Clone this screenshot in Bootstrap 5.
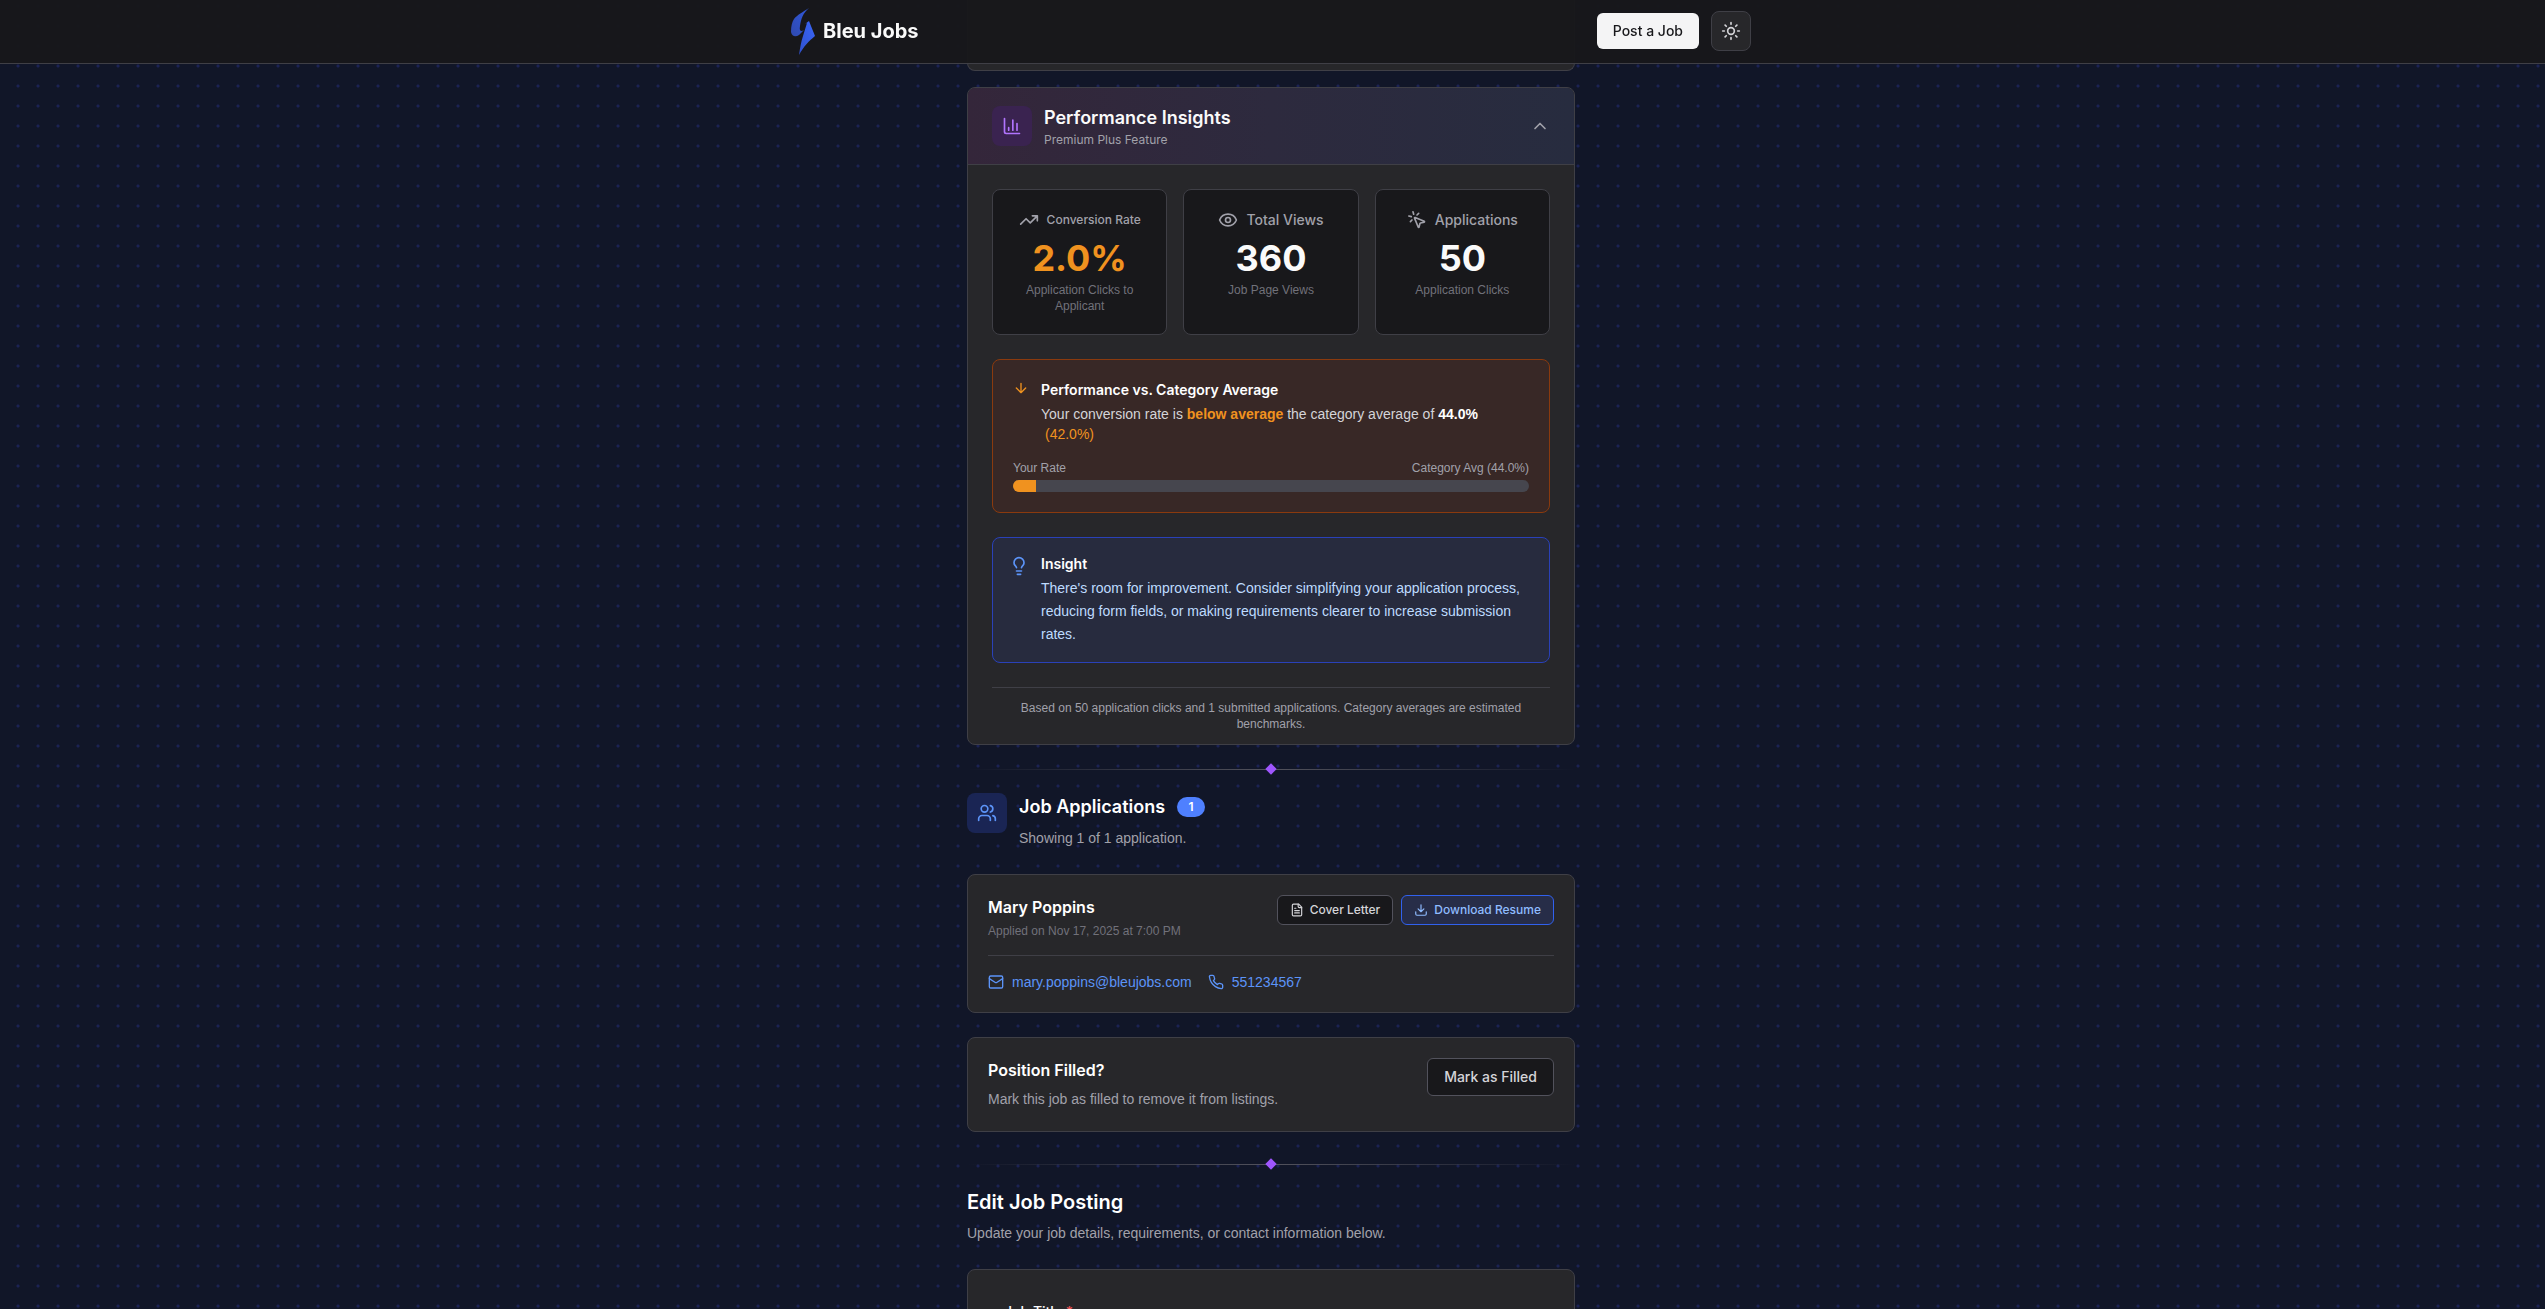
<!DOCTYPE html>
<html lang="en" data-bs-theme="dark">
<head>
<meta charset="utf-8">
<meta name="viewport" content="width=device-width, initial-scale=1">
<title>Bleu Jobs</title>
<link href="https://cdn.jsdelivr.net/npm/bootstrap@5.3.0/dist/css/bootstrap.min.css" rel="stylesheet">
<style>
  :root { --line: #3f3f46; --panel: #27272a; --ink: #18181b; --muted: #a1a1aa; --faint: #71717a; --scroll: 3px; --copy: "Liberation Sans", Arial, sans-serif; }
  html { overflow: hidden; }
  body {
    font-family: Inter, "Liberation Sans", sans-serif; font-size: 14px; line-height: 20px; color: #fafafa;
    background-color: #111628;
    background-image: radial-gradient(circle, #1b2254 1px, transparent 2px);
    background-size: 20px 20px; background-position: 8px -4px;
    padding-right: var(--scroll);
  }
  h1, h2, h3, p { margin: 0; }
  svg { flex: none; fill: none; stroke: currentColor; stroke-width: 2; stroke-linecap: round; stroke-linejoin: round; }
  .site-nav { background: rgba(24,24,27,.97); border-bottom: 1px solid var(--line); padding: 11px var(--scroll) 12px 0; }
  .site-nav-inner { max-width: 960px; }
  .brand-name { font-size: 20px; font-weight: 700; line-height: 28px; color: #fafafa; }
  .brand-link { margin: -4px 0; }
  .brand-link svg { stroke: none; }
  .btn { --bs-btn-font-size: 14px; --bs-btn-font-weight: 500; --bs-btn-line-height: 20px; --bs-btn-border-radius: 6px; --bs-btn-padding-x: 16px; --bs-btn-padding-y: 8px; }
  .btn-post { --bs-btn-bg: #f4f4f5; --bs-btn-color: #18181b; --bs-btn-border-width: 0; --bs-btn-hover-bg: #fff; --bs-btn-hover-color: #18181b; }
  .btn-theme { --bs-btn-bg: #27272a; --bs-btn-color: #d4d4d8; --bs-btn-border-color: #3f3f46; --bs-btn-padding-x: 9px; --bs-btn-padding-y: 9px; --bs-btn-border-radius: 8px; }
  .btn-ink { --bs-btn-bg: #18181b; --bs-btn-color: #d4d4d8; --bs-btn-border-color: #52525c; }
  .btn-resume { --bs-btn-bg: #272d48; --bs-btn-color: #8fbcff; --bs-btn-border-color: #3161ee; }
  .btn-compact { --bs-btn-font-size: 12px; --bs-btn-line-height: 16px; --bs-btn-padding-x: 12px; --bs-btn-padding-y: 6px; }
  .gap-icon { gap: 6px; }
  .gap-12 { gap: 12px; }
  .page-col { max-width: 608px; }
  .panel { background: var(--panel); border: 1px solid var(--line); border-radius: 8px; }
  .panel-above { height: 71px; border-top: 0; border-radius: 0 0 8px 8px; }
  .panel-pad { padding: 20px; }
  .insight-toggle {
    padding: 16px 24px; border: 0; border-bottom: 1px solid var(--line); border-radius: 7px 7px 0 0; color: inherit;
    background: linear-gradient(90deg, #34263a, #2d2a3e 50%, #272c3f);
  }
  .icon-tile { width: 40px; height: 40px; border-radius: 8px; flex: none; }
  .tile-purple { background: #3a2350; color: #b074fc; }
  .tile-blue { background: #1a2554; color: #5c94f8; }
  .title-lg { font-size: 18px; line-height: 28px; font-weight: 600; }
  .title-xl { font-size: 20px; line-height: 28px; font-weight: 600; }
  .title-md { font-size: 16px; line-height: 24px; font-weight: 600; }
  .title-sm { font-size: 14px; line-height: 20px; font-weight: 600; }
  .tiny { font-size: 12px; line-height: 16px; }
  .copy { font-family: var(--copy); }
  .c-muted { color: var(--muted); }
  .c-faint { color: var(--faint); }
  .c-orange { color: #f0921f; }
  .insight-body { padding: 24px 24px 12px; gap: 24px; }
  .stat { background: var(--ink); border: 1px solid var(--line); border-radius: 8px; padding: 20px; text-align: center; flex: 1 1 0; }
  .stat-label { font-weight: 500; color: var(--muted); margin-bottom: 8px; height: 20px; }
  .stat-num { font-size: 36px; line-height: 40px; font-weight: 700; margin-bottom: 4px; }
  .compare { background: #382826; border: 1px solid #8a3a0e; border-radius: 8px; padding: 20px; }
  .compare-text { color: #d4d4d8; margin-top: 4px; }
  .rate-bar { --bs-progress-height: 12px; --bs-progress-bg: #46464e; --bs-progress-bar-bg: #f0921f; --bs-progress-border-radius: 6px; }
  .tip { background: #272b3e; border: 1px solid #2a41b8; border-radius: 8px; padding: 16px; }
  .tip-icon { color: #5c94f8; margin-top: 2px; }
  .tip-title { margin-bottom: 3px; }
  .tip-text { line-height: 23px; color: #bedbff; }
  .foot-note { border-top: 1px solid var(--line); padding-top: 12px; text-align: center; }
  .rule { position: relative; padding: 24px 0; }
  .rule::before { content: ""; display: block; height: 1px; margin-bottom: -1px; background: linear-gradient(90deg, transparent, #52525c 50%, transparent); }
  .rule::after { content: ""; position: absolute; left: 50%; top: 50%; width: 8px; height: 8px; background: #9f56fd; transform: translate(-50%, -50%) rotate(45deg); }
  .count-pill { background: #4f80ff; color: #fff; font-size: 12px; line-height: 16px; font-weight: 600; padding: 2px 0; min-width: 28px; text-align: center; border-radius: 10px; }
  .sub { line-height: 23px; color: var(--muted); margin-top: 6px; }
  .contact-row { border-top: 1px solid var(--line); margin-top: 16px; padding-top: 16px; }
  .contact-row a { color: #5c94f8; font-weight: 500; text-decoration: none; }
  .form-panel { padding: 32px 36px; }
  .form-panel .form-label { font-weight: 500; margin-bottom: 8px; }
  .form-panel .form-control { background: var(--ink); border-color: var(--line); }
  .req { color: #fb5a5a; }
</style>
</head>
<body>
<nav class="site-nav fixed-top">
  <div class="site-nav-inner mx-auto d-flex align-items-center justify-content-between">
    <a href="#" class="brand-link d-flex align-items-center gap-2 text-decoration-none">
      <svg width="24" height="47" viewBox="0 0 24 47" aria-hidden="true">
        <defs>
          <linearGradient id="g1" x1="0" y1="1" x2="1" y2="0"><stop offset="0" stop-color="#2f49ae"/><stop offset="1" stop-color="#3058dc"/></linearGradient>
          <linearGradient id="g2" x1="0" y1="1" x2="1" y2="0"><stop offset="0" stop-color="#2f50cc"/><stop offset="1" stop-color="#3a66f8"/></linearGradient>
        </defs>
        <path fill="url(#g1)" d="M18 0C12 4 6 7 3 11C1 14 0 18 0 24C1 29 5 29 8 27L13 22C10 24 8 23 9 18C10 11 12 5 18 0Z"/>
        <path fill="url(#g2)" d="M18 13L24 28C18 33 13 38 8 47C9 40 10 34 12 28L16 15L14 16Z"/>
      </svg>
      <span class="brand-name">Bleu Jobs</span>
    </a>
    <div class="d-flex align-items-center gap-12">
      <button type="button" class="btn btn-post">Post a Job</button>
      <button type="button" class="btn btn-theme d-flex" aria-label="Toggle theme">
        <svg width="20" height="20" viewBox="0 0 24 24"><circle cx="12" cy="12" r="4"/><path d="M12 2v2M12 20v2M4.93 4.93l1.41 1.41M17.66 17.66l1.41 1.41M2 12h2M20 12h2M6.34 17.66l-1.41 1.41M19.07 4.93l-1.41 1.41"/></svg>
      </button>
    </div>
  </div>
</nav>

<main class="page-col mx-auto">
  <div class="panel panel-above mb-3"></div>

  <section class="panel">
    <button type="button" class="insight-toggle w-100 d-flex align-items-center gap-12 text-start" aria-expanded="true">
      <span class="icon-tile tile-purple d-flex align-items-center justify-content-center">
        <svg width="20" height="20" viewBox="0 0 24 24"><path d="M3 3v16a2 2 0 0 0 2 2h16M13 17V5M18 17V9M8 17v-3"/></svg>
      </span>
      <span class="flex-grow-1">
        <span class="title-lg d-block">Performance Insights</span>
        <span class="tiny c-muted d-block">Premium Plus Feature</span>
      </span>
      <svg class="c-muted" width="20" height="20" viewBox="0 0 24 24"><path d="m18 15-6-6-6 6"/></svg>
    </button>

    <div class="insight-body d-flex flex-column">
      <div class="d-flex gap-3">
        <div class="stat">
          <div class="stat-label tiny d-flex align-items-center justify-content-center gap-2">
            <svg width="20" height="20" viewBox="0 0 24 24"><path d="M22 7l-8.500 8.500-5-5L2 17M16 7h6v6"/></svg>
            <span class="text-nowrap">Conversion Rate</span>
          </div>
          <div class="stat-num c-orange">2.0%</div>
          <div class="tiny c-faint copy">Application Clicks to Applicant</div>
        </div>
        <div class="stat">
          <div class="stat-label d-flex align-items-center justify-content-center gap-2">
            <svg width="20" height="20" viewBox="0 0 24 24"><path d="M2.062 12.348a1 1 0 0 1 0-.696 10.750 10.750 0 0 1 19.876 0 1 1 0 0 1 0 .696 10.750 10.750 0 0 1-19.876 0"/><circle cx="12" cy="12" r="3"/></svg>
            <span class="text-nowrap">Total Views</span>
          </div>
          <div class="stat-num">360</div>
          <div class="tiny c-faint copy">Job Page Views</div>
        </div>
        <div class="stat">
          <div class="stat-label d-flex align-items-center justify-content-center gap-2">
            <svg width="20" height="20" viewBox="0 0 24 24"><path d="M14 4.100 12 6M5.100 8l-2.900-.8M6 12l-1.900 2M7.200 2.200 8 5.100M9.037 9.690a.498.498 0 0 1 .653-.653l11 4.500a.5.5 0 0 1-.074.949l-4.349 1.041a1 1 0 0 0-.740.739l-1.040 4.350a.5.5 0 0 1-.950.074z"/></svg>
            <span class="text-nowrap">Applications</span>
          </div>
          <div class="stat-num">50</div>
          <div class="tiny c-faint copy">Application Clicks</div>
        </div>
      </div>

      <div class="compare">
        <div class="d-flex gap-12 mb-3">
          <svg class="c-orange" width="16" height="16" viewBox="0 0 24 24"><path d="M12 5v14M19 12l-7 7-7-7"/></svg>
          <div>
            <h3 class="title-sm">Performance vs. Category Average</h3>
            <p class="compare-text copy">Your conversion rate is <span class="c-orange fw-semibold">below average</span> the category average of <span class="text-white fw-semibold">44.0%</span> <span class="c-orange ms-1">(42.0%)</span></p>
          </div>
        </div>
        <div class="tiny c-muted copy d-flex justify-content-between mb-1"><span>Your Rate</span><span>Category Avg (44.0%)</span></div>
        <div class="progress rate-bar" role="progressbar" aria-label="Your rate" aria-valuenow="2" aria-valuemin="0" aria-valuemax="44">
          <div class="progress-bar" style="width: 4.5%"></div>
        </div>
      </div>

      <div class="tip d-flex gap-12">
        <svg class="tip-icon" width="20" height="20" viewBox="0 0 24 24"><path d="M15 14c.2-1 .7-1.700 1.500-2.500 1-.9 1.500-2.200 1.500-3.500A6 6 0 0 0 6 8c0 1 .2 2.200 1.500 3.500.7.7 1.300 1.500 1.500 2.500M9 18h6M10 22h4"/></svg>
        <div>
          <h3 class="title-sm tip-title">Insight</h3>
          <p class="tip-text copy">There's room for improvement. Consider simplifying your application process, reducing form fields, or making requirements clearer to increase submission rates.</p>
        </div>
      </div>

      <p class="foot-note tiny c-muted copy">Based on 50 application clicks and 1 submitted applications. Category averages are estimated benchmarks.</p>
    </div>
  </section>

  <div class="rule"></div>

  <section>
    <div class="d-flex gap-12 mb-4">
      <span class="icon-tile tile-blue d-flex align-items-center justify-content-center">
        <svg width="20" height="20" viewBox="0 0 24 24"><path d="M16 21v-2a4 4 0 0 0-4-4H6a4 4 0 0 0-4 4v2"/><circle cx="9" cy="7" r="4"/><path d="M22 21v-2a4 4 0 0 0-3-3.870M16 3.130a4 4 0 0 1 0 7.750"/></svg>
      </span>
      <div>
        <div class="d-flex align-items-center gap-12">
          <h2 class="title-lg">Job Applications</h2>
          <span class="count-pill">1</span>
        </div>
        <p class="sub copy">Showing 1 of 1 application.</p>
      </div>
    </div>

    <article class="panel panel-pad mb-4">
      <div class="d-flex justify-content-between align-items-start">
        <div>
          <h3 class="title-md mb-1">Mary Poppins</h3>
          <p class="tiny c-faint copy">Applied on Nov 17, 2025 at 7:00 PM</p>
        </div>
        <div class="d-flex gap-2">
          <button type="button" class="btn btn-ink btn-compact d-flex align-items-center gap-icon">
            <svg width="14" height="14" viewBox="0 0 24 24"><path d="M15 2H6a2 2 0 0 0-2 2v16a2 2 0 0 0 2 2h12a2 2 0 0 0 2-2V7Z"/><path d="M14 2v4a2 2 0 0 0 2 2h4M10 9H8M16 13H8M16 17H8"/></svg>
            Cover Letter
          </button>
          <button type="button" class="btn btn-resume btn-compact d-flex align-items-center gap-icon">
            <svg width="14" height="14" viewBox="0 0 24 24"><path d="M21 15v4a2 2 0 0 1-2 2H5a2 2 0 0 1-2-2v-4M7 10l5 5 5-5M12 15V3"/></svg>
            Download Resume
          </button>
        </div>
      </div>
      <div class="contact-row copy d-flex gap-3">
        <a href="mailto:mary.poppins@bleujobs.com" class="d-flex align-items-center gap-2">
          <svg width="16" height="16" viewBox="0 0 24 24"><rect x="2" y="3" width="20" height="18" rx="2"/><path d="m22 7-8.970 5.700a1.940 1.940 0 0 1-2.060 0L2 7"/></svg>
          mary.poppins@bleujobs.com
        </a>
        <a href="tel:551234567" class="d-flex align-items-center gap-2">
          <svg width="16" height="16" viewBox="0 0 24 24"><path d="M22 16.920v3a2 2 0 0 1-2.180 2 19.790 19.790 0 0 1-8.630-3.070 19.500 19.500 0 0 1-6-6 19.790 19.790 0 0 1-3.070-8.670A2 2 0 0 1 4.110 2h3a2 2 0 0 1 2 1.720 12.840 12.840 0 0 0 .7 2.810 2 2 0 0 1-.45 2.110L8.090 9.910a16 16 0 0 0 6 6l1.270-1.270a2 2 0 0 1 2.110-.45 12.840 12.840 0 0 0 2.810.7A2 2 0 0 1 22 16.920z"/></svg>
          551234567
        </a>
      </div>
    </article>

    <article class="panel panel-pad mb-2 d-flex justify-content-between align-items-start">
      <div>
        <h3 class="title-md">Position Filled?</h3>
        <p class="sub copy">Mark this job as filled to remove it from listings.</p>
      </div>
      <button type="button" class="btn btn-ink">Mark as Filled</button>
    </article>
  </section>

  <div class="rule"></div>

  <section>
    <h2 class="title-xl">Edit Job Posting</h2>
    <p class="sub copy mb-4">Update your job details, requirements, or contact information below.</p>
    <form class="panel form-panel">
      <label class="form-label" for="jobTitle">Job Title <span class="req">*</span></label>
      <input id="jobTitle" type="text" class="form-control">
    </form>
  </section>
</main>
<script src="https://cdn.jsdelivr.net/npm/bootstrap@5.3.0/dist/js/bootstrap.bundle.min.js"></script>
</body>
</html>
